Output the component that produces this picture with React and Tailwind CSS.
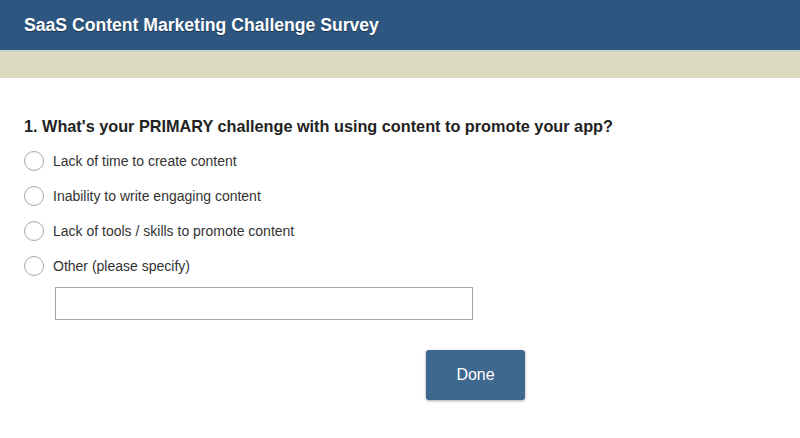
export default function App() {
  const options = [
    "Lack of time to create content",
    "Inability to write engaging content",
    "Lack of tools / skills to promote content",
    "Other (please specify)",
  ];
  return (
    <div className="w-[800px] h-[438px] bg-white overflow-hidden" style={{ fontFamily: '"Liberation Sans", Arial, sans-serif' }}>
      <div className="h-[52px] bg-[#2d5780] flex items-center pl-6 border-b-2 border-[#c9d6c8]">
        <h1 className="text-white font-bold text-[17.6px] [text-shadow:0_1px_1px_rgba(0,0,0,0.4)]">SaaS Content Marketing Challenge Survey</h1>
      </div>
      <div className="h-[26px] bg-[#dcdac0]" />
      <div className="pl-6 pt-[37px]">
        <h2 className="text-[16.25px] font-bold text-[#222] leading-[22px]">1. What's your PRIMARY challenge with using content to promote your app?</h2>
        <div className="mt-[14px] flex flex-col gap-[15px]">
          {options.map((o) => (
            <label key={o} className="flex items-center h-[20px]">
              <span className="w-[20px] h-[20px] rounded-full border border-[#a8a8a8] bg-white shrink-0" />
              <span className="ml-[9px] text-[14px] text-[#333]">{o}</span>
            </label>
          ))}
        </div>
        <div className="ml-[31px] mt-[11px] w-[418px] h-[33px] border border-[#a6a6a6] bg-white" />
        <div className="mt-[30px] ml-[402px]">
          <button className="w-[99px] h-[50px] rounded-[3px] bg-[#3f6891] text-white text-[16px] shadow-[0_1px_3px_rgba(0,0,0,0.35)]">Done</button>
        </div>
      </div>
    </div>
  );
}
